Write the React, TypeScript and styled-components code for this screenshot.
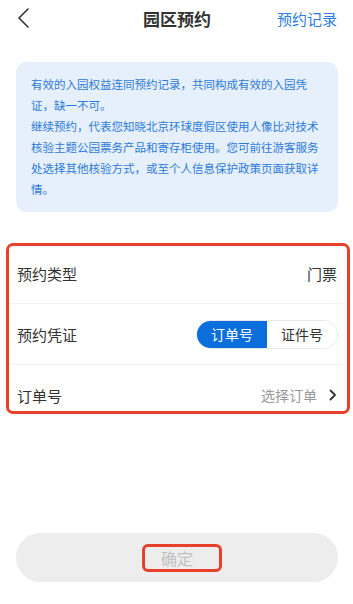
import React from 'react'
import styled, { createGlobalStyle } from 'styled-components'

const GlobalStyle = createGlobalStyle`
    html, body {
        margin: 0;
        padding: 0;
        background: #ffffff;
    }
    body {
        font-family: "Noto Sans CJK SC", "Noto Sans", sans-serif;
    }
`

const Page = styled.div`
    width: 353px;
    height: 604px;
    display: flex;
    flex-direction: column;
    background: #ffffff;
    overflow: hidden;
`

const Header = styled.div`
    height: 36px;
    display: grid;
    grid-template-columns: 1fr auto 1fr;
    align-items: center;
    padding: 0 16px 0 17px;
`

const BackButton = styled.div`
    display: flex;
    align-items: center;
    color: #333333;
`

const Title = styled.div`
    font-size: 17px;
    font-weight: 700;
    color: #333333;
`

const HeaderLink = styled.div`
    justify-self: end;
    font-size: 15px;
    color: #2a7de1;
`

const Notice = styled.div`
    margin: 26px 15px 0 16px;
    padding: 12px 14px 12px 15px;
    background: #e6effc;
    border-radius: 10px;
    color: #2b7bd8;
    font-size: 11.5px;
    line-height: 21px;
`

const FormArea = styled.div`
    position: relative;
    margin-top: 31px;
`

const Row = styled.div`
    height: 60px;
    display: flex;
    align-items: center;
    justify-content: space-between;
    padding: 0 16px 0 17px;
`

const Label = styled.div`
    font-size: 15px;
    color: #333333;
`

const Value = styled.div`
    font-size: 15px;
    color: #333333;
`

const Divider = styled.div`
    height: 1px;
    margin: 0 10px;
    background: #f3f3f3;
`

const Segmented = styled.div`
    display: flex;
    height: 29px;
    border-radius: 15px;
    overflow: hidden;
    border: 1px solid #e8e8e8;
    box-sizing: border-box;
    margin-right: -1px;
`

const Segment = styled.div<{ $active?: boolean }>`
    width: 70px;
    display: flex;
    align-items: center;
    justify-content: center;
    font-size: 14px;
    background: ${p => (p.$active ? '#0a6edc' : '#ffffff')};
    color: ${p => (p.$active ? '#ffffff' : '#333333')};
`

const Picker = styled.div`
    display: flex;
    align-items: center;
    gap: 12px;
    font-size: 14px;
    color: #999999;
`

const Highlight = styled.div`
    position: absolute;
    left: 6px;
    top: 0;
    width: 344px;
    height: 171px;
    box-sizing: border-box;
    border: 3px solid #e8412b;
    border-radius: 7px;
    pointer-events: none;
`

const Spacer = styled.div`
    flex: 1;
`

const ConfirmButton = styled.div`
    margin: 0 15px 22px 16px;
    height: 49px;
    border-radius: 25px;
    background: #ededed;
    display: flex;
    align-items: center;
    justify-content: center;
`

const ConfirmLabel = styled.span`
    position: relative;
    font-size: 16px;
    color: #c2c2c2;
    line-height: 20px;

    &::after {
        content: '';
        position: absolute;
        left: -19px;
        right: -29px;
        top: -4px;
        bottom: -4px;
        border: 3px solid #e8412b;
        border-radius: 6px;
    }
`

const ChevronLeft = () => (
    <svg width="12" height="20" viewBox="0 0 12 20" fill="none">
        <path d="M11 1 L2 10 L11 19" stroke="currentColor" strokeWidth="1.6" strokeLinecap="round" strokeLinejoin="round" />
    </svg>
)

const ChevronRight = () => (
    <svg width="8" height="12" viewBox="0 0 8 12" fill="none">
        <path d="M1.5 1.5 L6 6 L1.5 10.5" stroke="#333333" strokeWidth="1.8" strokeLinecap="round" strokeLinejoin="round" />
    </svg>
)

const App: React.FC = () => {
    return (
        <Page>
            <GlobalStyle />
            <Header>
                <BackButton><ChevronLeft /></BackButton>
                <Title>园区预约</Title>
                <HeaderLink>预约记录</HeaderLink>
            </Header>
            <Notice>
                有效的入园权益连同预约记录，共同构成有效的入园凭证，缺一不可。
                <br />
                继续预约，代表您知晓北京环球度假区使用人像比对技术核验主题公园票务产品和寄存柜使用。您可前往游客服务处选择其他核验方式，或至个人信息保护政策页面获取详情。
            </Notice>
            <FormArea>
                <Row>
                    <Label>预约类型</Label>
                    <Value>门票</Value>
                </Row>
                <Divider />
                <Row>
                    <Label>预约凭证</Label>
                    <Segmented>
                        <Segment $active>订单号</Segment>
                        <Segment>证件号</Segment>
                    </Segmented>
                </Row>
                <Divider />
                <Row>
                    <Label>订单号</Label>
                    <Picker>
                        选择订单
                        <ChevronRight />
                    </Picker>
                </Row>
                <Highlight />
            </FormArea>
            <Spacer />
            <ConfirmButton>
                <ConfirmLabel>确定</ConfirmLabel>
            </ConfirmButton>
        </Page>
    )
}

export default App
